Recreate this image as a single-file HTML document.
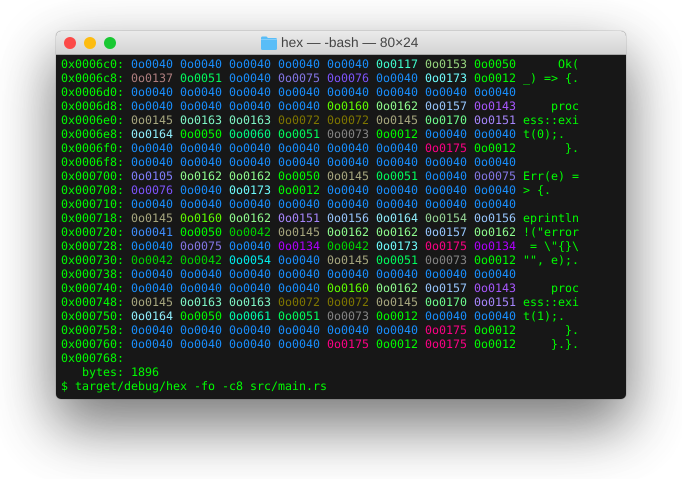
<!DOCTYPE html>
<html>
<head>
<meta charset="utf-8">
<style>
html,body{margin:0;padding:0;width:682px;height:479px;background:#fff;overflow:hidden}
#win{position:absolute;left:56px;top:31px;width:570px;height:368px;border-radius:5px;background:#171717;box-shadow:0 24px 56px 2px rgba(0,0,0,.46),0 30px 74px rgba(0,0,0,.12),0 0 1px rgba(0,0,0,.5)}
#bar{position:absolute;left:0;top:0;width:570px;height:23px;border-radius:5px 5px 0 0;background:linear-gradient(#ebebeb,#d4d4d4);border-bottom:1px solid #a9a9a9;box-sizing:content-box}
.dot{position:absolute;top:6px;width:12px;height:12px;border-radius:50%}
#title{position:absolute;left:225px;top:0;font:13.7px/24px "Liberation Sans",sans-serif;color:#444;white-space:nowrap;text-rendering:geometricPrecision}
#folder{position:absolute;left:205px;top:5px}
pre{position:absolute;left:5px;top:26px;margin:0;font:11.63px/14px "DejaVu Sans Mono",monospace;color:#0f0;white-space:pre;text-rendering:geometricPrecision;will-change:transform;opacity:.99}
i{font-style:normal}
.a{color:#1a90ff}.b{color:#b08080}.c{color:#00ff5f}.d{color:#8578e8}.e{color:#7f55ff}.f{color:#40ffd0}.g{color:#98d880}.h{color:#0f0}.j{color:#70ffff}.k{color:#60ff00}.l{color:#90ff90}.m{color:#98c8ff}.n{color:#a858ff}.o{color:#a8a880}.p{color:#80f8c8}.q{color:#807800}.r{color:#70ff90}.s{color:#a888ff}.t{color:#90f0ff}.u{color:#00ff87}.v{color:#858585}.w{color:#ff0087}.x{color:#8080ff}.y{color:#98d898}.z{color:#3f8fff}.aa{color:#00d700}.bb{color:#b000ff}.cc{color:#00f0f0}.dd{color:#00ffaf}
</style>
</head>
<body>
<div id="win">
<div id="bar">
<div class="dot" style="left:8px;background:#fc4a48"></div>
<div class="dot" style="left:28px;background:#fdbc10"></div>
<div class="dot" style="left:48px;background:#19c832"></div>
<svg id="folder" width="16" height="14" viewBox="0 0 16 14"><path d="M0 2.2Q0 .5 1.5.5H5.5L7 2H14.5Q16 2 16 3.5V12.5Q16 14 14.5 14H1.5Q0 14 0 12.5Z" fill="#59bdf7"/><path d="M0 3.5H16" stroke="#8ed3fb" stroke-width=".8"/></svg>
<div id="title">hex — -bash — 80×24</div>
</div>
<pre>0x0006c0: <i class=a>0o0040</i> <i class=a>0o0040</i> <i class=a>0o0040</i> <i class=a>0o0040</i> <i class=a>0o0040</i> <i class=f>0o0117</i> <i class=g>0o0153</i> <i class=h>0o0050</i>      Ok(
0x0006c8: <i class=b>0o0137</i> <i class=c>0o0051</i> <i class=a>0o0040</i> <i class=d>0o0075</i> <i class=e>0o0076</i> <i class=a>0o0040</i> <i class=j>0o0173</i> <i class=h>0o0012</i> _) =&gt; {.
0x0006d0: <i class=a>0o0040</i> <i class=a>0o0040</i> <i class=a>0o0040</i> <i class=a>0o0040</i> <i class=a>0o0040</i> <i class=a>0o0040</i> <i class=a>0o0040</i> <i class=a>0o0040</i>
0x0006d8: <i class=a>0o0040</i> <i class=a>0o0040</i> <i class=a>0o0040</i> <i class=a>0o0040</i> <i class=k>0o0160</i> <i class=l>0o0162</i> <i class=m>0o0157</i> <i class=n>0o0143</i>     proc
0x0006e0: <i class=o>0o0145</i> <i class=p>0o0163</i> <i class=p>0o0163</i> <i class=q>0o0072</i> <i class=q>0o0072</i> <i class=o>0o0145</i> <i class=r>0o0170</i> <i class=s>0o0151</i> ess::exi
0x0006e8: <i class=t>0o0164</i> <i class=h>0o0050</i> <i class=u>0o0060</i> <i class=c>0o0051</i> <i class=v>0o0073</i> <i class=h>0o0012</i> <i class=a>0o0040</i> <i class=a>0o0040</i> t(0);.
0x0006f0: <i class=a>0o0040</i> <i class=a>0o0040</i> <i class=a>0o0040</i> <i class=a>0o0040</i> <i class=a>0o0040</i> <i class=a>0o0040</i> <i class=w>0o0175</i> <i class=h>0o0012</i>       }.
0x0006f8: <i class=a>0o0040</i> <i class=a>0o0040</i> <i class=a>0o0040</i> <i class=a>0o0040</i> <i class=a>0o0040</i> <i class=a>0o0040</i> <i class=a>0o0040</i> <i class=a>0o0040</i>
0x000700: <i class=x>0o0105</i> <i class=l>0o0162</i> <i class=l>0o0162</i> <i class=h>0o0050</i> <i class=o>0o0145</i> <i class=c>0o0051</i> <i class=a>0o0040</i> <i class=d>0o0075</i> Err(e) =
0x000708: <i class=e>0o0076</i> <i class=a>0o0040</i> <i class=j>0o0173</i> <i class=h>0o0012</i> <i class=a>0o0040</i> <i class=a>0o0040</i> <i class=a>0o0040</i> <i class=a>0o0040</i> &gt; {.
0x000710: <i class=a>0o0040</i> <i class=a>0o0040</i> <i class=a>0o0040</i> <i class=a>0o0040</i> <i class=a>0o0040</i> <i class=a>0o0040</i> <i class=a>0o0040</i> <i class=a>0o0040</i>
0x000718: <i class=o>0o0145</i> <i class=k>0o0160</i> <i class=l>0o0162</i> <i class=s>0o0151</i> <i class=m>0o0156</i> <i class=t>0o0164</i> <i class=y>0o0154</i> <i class=m>0o0156</i> eprintln
0x000720: <i class=z>0o0041</i> <i class=h>0o0050</i> <i class=aa>0o0042</i> <i class=o>0o0145</i> <i class=l>0o0162</i> <i class=l>0o0162</i> <i class=m>0o0157</i> <i class=l>0o0162</i> !("error
0x000728: <i class=a>0o0040</i> <i class=d>0o0075</i> <i class=a>0o0040</i> <i class=bb>0o0134</i> <i class=aa>0o0042</i> <i class=j>0o0173</i> <i class=w>0o0175</i> <i class=bb>0o0134</i>  = \"{}\
0x000730: <i class=aa>0o0042</i> <i class=aa>0o0042</i> <i class=cc>0o0054</i> <i class=a>0o0040</i> <i class=o>0o0145</i> <i class=c>0o0051</i> <i class=v>0o0073</i> <i class=h>0o0012</i> "", e);.
0x000738: <i class=a>0o0040</i> <i class=a>0o0040</i> <i class=a>0o0040</i> <i class=a>0o0040</i> <i class=a>0o0040</i> <i class=a>0o0040</i> <i class=a>0o0040</i> <i class=a>0o0040</i>
0x000740: <i class=a>0o0040</i> <i class=a>0o0040</i> <i class=a>0o0040</i> <i class=a>0o0040</i> <i class=k>0o0160</i> <i class=l>0o0162</i> <i class=m>0o0157</i> <i class=n>0o0143</i>     proc
0x000748: <i class=o>0o0145</i> <i class=p>0o0163</i> <i class=p>0o0163</i> <i class=q>0o0072</i> <i class=q>0o0072</i> <i class=o>0o0145</i> <i class=r>0o0170</i> <i class=s>0o0151</i> ess::exi
0x000750: <i class=t>0o0164</i> <i class=h>0o0050</i> <i class=dd>0o0061</i> <i class=c>0o0051</i> <i class=v>0o0073</i> <i class=h>0o0012</i> <i class=a>0o0040</i> <i class=a>0o0040</i> t(1);.
0x000758: <i class=a>0o0040</i> <i class=a>0o0040</i> <i class=a>0o0040</i> <i class=a>0o0040</i> <i class=a>0o0040</i> <i class=a>0o0040</i> <i class=w>0o0175</i> <i class=h>0o0012</i>       }.
0x000760: <i class=a>0o0040</i> <i class=a>0o0040</i> <i class=a>0o0040</i> <i class=a>0o0040</i> <i class=w>0o0175</i> <i class=h>0o0012</i> <i class=w>0o0175</i> <i class=h>0o0012</i>     }.}.
0x000768:
   bytes: 1896
$ target/debug/hex -fo -c8 src/main.rs</pre>
</div>
</body>
</html>
